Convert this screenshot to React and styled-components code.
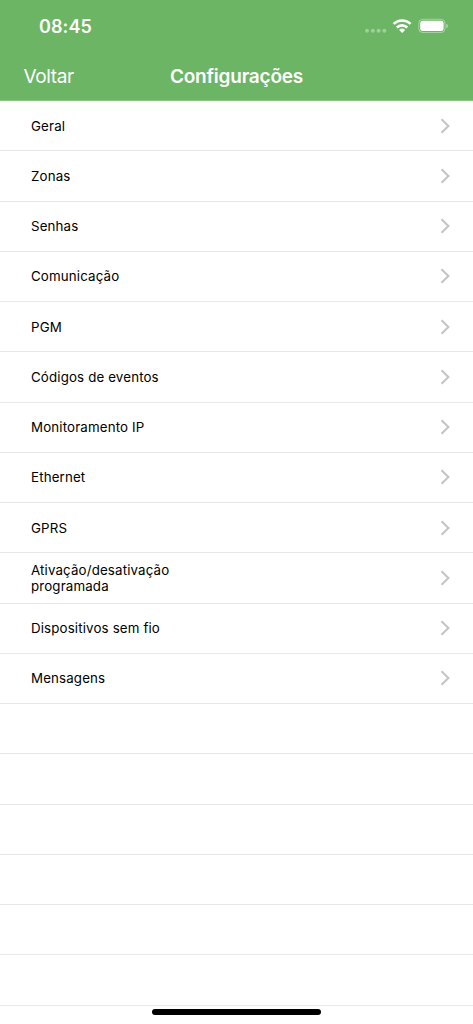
import styled, { createGlobalStyle } from 'styled-components'

const GlobalStyle = createGlobalStyle`
  * {
    box-sizing: border-box;
  }

  body {
    margin: 0;
    background: #fff;
    font-family: Inter, 'Liberation Sans', sans-serif;
    overflow: hidden;
  }
`

const Screen = styled.div`
  position: relative;
  width: 473px;
  height: 1024px;
  overflow: hidden;
  background: #fff;
`

const Header = styled.header`
  height: 101px;
  border-bottom: 1px solid #86c67f;
  background: #6cb564;
  color: #fff;
`

const StatusBar = styled.div`
  display: flex;
  align-items: center;
  justify-content: space-between;
  height: 52px;
  padding: 0 25px 0 39px;
`

const Clock = styled.span`
  padding-top: 2px;
  font-size: 18px;
  font-weight: 600;
  line-height: 22px;
  letter-spacing: 0.1px;
`

const StatusIcons = styled.svg`
  display: block;
  width: 84px;
  height: 20px;
`

const NavBar = styled.nav`
  display: grid;
  grid-template-columns: 1fr auto 1fr;
  align-items: center;
  height: 48px;
  padding: 1px 23.5px 0;
`

const BackButton = styled.button`
  justify-self: start;
  padding: 0;
  border: none;
  background: none;
  color: inherit;
  font: 400 19px/24px Inter, sans-serif;
  letter-spacing: -0.4px;
  cursor: pointer;
`

const Title = styled.h1`
  margin: 0;
  font-size: 19px;
  font-weight: 600;
  line-height: 24px;
  letter-spacing: -0.2px;
`

const List = styled.ul`
  margin: 0;
  padding: 0;
  list-style: none;
`

const Row = styled.li`
  display: flex;
  align-items: center;
  justify-content: space-between;
  height: 50.25px;
  padding: 0 22px 0 31px;
  border-bottom: 1px solid #e7e7e8;
`

const Label = styled.span`
  max-width: 170px;
  color: #000;
  font-size: 13.3px;
  line-height: 16px;
  letter-spacing: 0.15px;
`

const Chevron = styled.svg`
  width: 11px;
  height: 16px;
  fill: none;
  stroke: #c5c5c9;
  stroke-width: 2.1;
`

const HomeIndicator = styled.div`
  position: absolute;
  bottom: 9px;
  left: 152px;
  width: 169px;
  height: 6px;
  border-radius: 3px;
  background: #000;
`

const items = [
  'Geral',
  'Zonas',
  'Senhas',
  'Comunicação',
  'PGM',
  'Códigos de eventos',
  'Monitoramento IP',
  'Ethernet',
  'GPRS',
  'Ativação/desativação programada',
  'Dispositivos sem fio',
  'Mensagens',
]

const emptyRows = [0, 1, 2, 3, 4, 5]

const signalDots = [3, 8.8, 14.6, 20.4]

function StatusIndicators() {
  return (
    <StatusIcons viewBox="0 0 84 20" fill="#fff">
      {signalDots.map((cx) => (
        <circle key={cx} cx={cx} cy="14.8" r="2" fillOpacity="0.35" />
      ))}
      <g fill="none" stroke="#fff" strokeWidth="2.6">
        <path d="M29.6 7.9a12.2 12.2 0 0 1 17 0" />
        <path d="M32.9 11.5a7.4 7.4 0 0 1 10.4 0" />
      </g>
      <path d="M35.1 13.9a4.3 4.3 0 0 1 6 0L38.1 16.9z" />
      <rect
        x="54.8"
        y="3.3"
        width="26.2"
        height="13.2"
        rx="3.8"
        fill="none"
        stroke="#fff"
        strokeOpacity="0.4"
      />
      <rect x="56.2" y="4.7" width="23.4" height="10.4" rx="2.4" />
      <path d="M82.3 7.7a2.4 2.4 0 0 1 0 4.5z" fillOpacity="0.5" />
    </StatusIcons>
  )
}

export default function App() {
  return (
    <Screen>
      <GlobalStyle />
      <Header>
        <StatusBar>
          <Clock>08:45</Clock>
          <StatusIndicators />
        </StatusBar>
        <NavBar>
          <BackButton>Voltar</BackButton>
          <Title>Configurações</Title>
        </NavBar>
      </Header>
      <List>
        {items.map((item) => (
          <Row key={item}>
            <Label>{item}</Label>
            <Chevron viewBox="0 0 11 16">
              <path d="M1.5 1.2L8.4 8L1.5 14.8" />
            </Chevron>
          </Row>
        ))}
        {emptyRows.map((row) => (
          <Row key={row} />
        ))}
      </List>
      <HomeIndicator />
    </Screen>
  )
}
